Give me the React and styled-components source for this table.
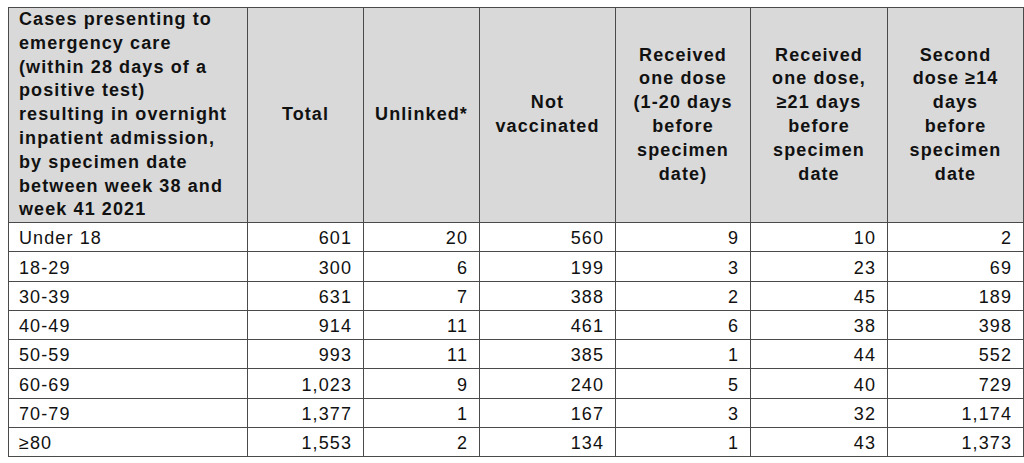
import React from 'react';
import styled, { createGlobalStyle } from 'styled-components';

const GlobalStyle = createGlobalStyle`
  html, body {
    margin: 0;
    padding: 0;
    background: #fff;
  }
  body {
    font-family: "Liberation Sans", Arial, sans-serif;
    color: #111;
  }
`;

const Page = styled.div`
  padding: 7px 0 0 8px;
`;

const Table = styled.table`
  border-collapse: collapse;
  table-layout: fixed;
  width: 1015px;
  border: 1px solid #4a4a4a;
  font-size: 18px;
  letter-spacing: 1.1px;
`;

const HeadCell = styled.th`
  background: #d9d9d9;
  border: 1px solid #4a4a4a;
  font-weight: bold;
  line-height: 23.8px;
  height: 214px;
  padding: 0 ${(p) => (p.$first ? '8px 0 10px' : '4px')};
  text-align: ${(p) => (p.$first ? 'left' : 'center')};
  vertical-align: middle;
`;

const Cell = styled.td`
  border: 1px solid #4a4a4a;
  height: 26.25px;
  padding: 2px ${(p) => (p.$label ? '4px 0 10px' : '11px 0 4px')};
  text-align: ${(p) => (p.$label ? 'left' : 'right')};
  vertical-align: middle;
  line-height: 20px;
  white-space: nowrap;
`;

const widths = [239, 116, 116, 136, 135, 137, 136];

const headers = [
  ['Cases presenting to', 'emergency care', '(within 28 days of a', 'positive test)', 'resulting in overnight', 'inpatient admission,', 'by specimen date', 'between week 38 and', 'week 41 2021'],
  ['Total'],
  ['Unlinked*'],
  ['Not', 'vaccinated'],
  ['Received', 'one dose', '(1-20 days', 'before', 'specimen', 'date)'],
  ['Received', 'one dose,', '≥21 days', 'before', 'specimen', 'date'],
  ['Second', 'dose ≥14', 'days', 'before', 'specimen', 'date'],
];

const rows = [
  ['Under 18', '601', '20', '560', '9', '10', '2'],
  ['18-29', '300', '6', '199', '3', '23', '69'],
  ['30-39', '631', '7', '388', '2', '45', '189'],
  ['40-49', '914', '11', '461', '6', '38', '398'],
  ['50-59', '993', '11', '385', '1', '44', '552'],
  ['60-69', '1,023', '9', '240', '5', '40', '729'],
  ['70-79', '1,377', '1', '167', '3', '32', '1,174'],
  ['≥80', '1,553', '2', '134', '1', '43', '1,373'],
];

const App = () => (
  <Page>
    <GlobalStyle />
    <Table>
      <colgroup>
        {widths.map((w, i) => (
          <col key={i} style={{ width: w }} />
        ))}
      </colgroup>
      <thead>
        <tr>
          {headers.map((lines, i) => (
            <HeadCell key={i} $first={i === 0}>
              {lines.map((l, j) => (
                <React.Fragment key={j}>
                  {l}
                  {j < lines.length - 1 && <br />}
                </React.Fragment>
              ))}
            </HeadCell>
          ))}
        </tr>
      </thead>
      <tbody>
        {rows.map((row) => (
          <tr key={row[0]}>
            {row.map((v, i) => (
              <Cell key={i} $label={i === 0}>
                {v}
              </Cell>
            ))}
          </tr>
        ))}
      </tbody>
    </Table>
  </Page>
);

export default App;
